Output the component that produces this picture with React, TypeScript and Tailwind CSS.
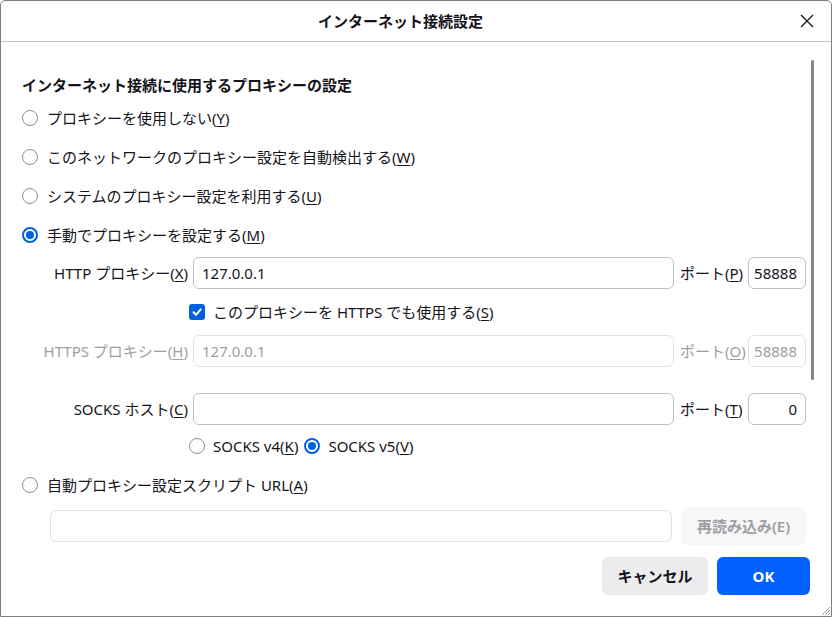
import React from "react";

const FONT = { fontFamily: '"Noto Sans", "Noto Sans CJK JP", sans-serif' };

function Key({ k }: { k: string }) {
  return (
    <>
      (<span className="underline underline-offset-2">{k}</span>)
    </>
  );
}

function Radio({ checked }: { checked?: boolean }) {
  if (checked) {
    return (
      <span className="flex h-4 w-4 shrink-0 items-center justify-center rounded-full border-2 border-[#0061e0] bg-white">
        <span className="h-2 w-2 rounded-full bg-[#0061e0]" />
      </span>
    );
  }
  return <span className="h-4 w-4 shrink-0 rounded-full border border-[#8f8f9d] bg-white" />;
}

function RadioRow({ label, k, checked }: { label: string; k: string; checked?: boolean }) {
  return (
    <div className="flex h-[39px] items-center gap-[9px]">
      <Radio checked={checked} />
      <span>
        {label}
        <Key k={k} />
      </span>
    </div>
  );
}

function Field({ value, disabled, right }: { value?: string; disabled?: boolean; right?: boolean }) {
  return (
    <div
      className={
        "flex h-8 items-center rounded-[6px] border bg-white px-[8px] " +
        (disabled ? "border-[#e3e3e6] text-[#9e9ea4]" : "border-[#bfbfc9] text-[#15141a]") +
        (right ? " justify-end" : "")
      }
    >
      {value}
    </div>
  );
}

export default function App() {
  return (
    <div
      className="relative flex h-[617px] w-[832px] flex-col overflow-hidden rounded-t-[5px] border border-[#7f7f7f] bg-white text-[15px] leading-5 text-[#15141a]"
      style={FONT}
    >
      <div className="flex h-[41px] shrink-0 items-center border-b border-[#c4c4c8]">
        <div className="flex-1 text-center font-bold">インターネット接続設定</div>
        <div className="pr-[17px]">
          <svg className="block" width="14" height="14" viewBox="0 0 14 14" fill="none" stroke="#15141a" strokeWidth="1.3">
            <path d="M1 1 L13 13 M13 1 L1 13" />
          </svg>
        </div>
      </div>

      <div className="relative flex-1 pl-[21px] pr-[25px]">
        <div className="absolute right-[17px] top-[18px] h-[320px] w-[3px] rounded-full bg-[#858585]" />

        <div className="mt-[33px] font-bold">インターネット接続に使用するプロキシーの設定</div>
        <div className="mt-[3px]">
          <RadioRow label="プロキシーを使用しない" k="Y" />
          <RadioRow label="このネットワークのプロキシー設定を自動検出する" k="W" />
          <RadioRow label="システムのプロキシー設定を利用する" k="U" />
          <RadioRow label="手動でプロキシーを設定する" k="M" checked />
        </div>

        <div className="mt-[3px] grid grid-cols-[171px_1fr_74px_58px] items-center">
          <div className="pr-[5px] text-right">
            HTTP プロキシー<Key k="X" />
          </div>
          <Field value="127.0.0.1" />
          <div className="whitespace-nowrap pl-[6px]">
            ポート<Key k="P" />
          </div>
          <Field value="58888" right />

          <div />
          <div className="col-span-3 -ml-[4px] flex h-[46px] items-center gap-[8px]">
            <span className="flex h-4 w-4 items-center justify-center rounded-[3px] bg-[#0061e0]">
              <svg width="12" height="12" viewBox="0 0 12 12" fill="none" stroke="white" strokeWidth="2" strokeLinecap="round" strokeLinejoin="round">
                <path d="M2.5 6.3 L5 8.8 L9.7 3.4" />
              </svg>
            </span>
            <span>
              このプロキシーを HTTPS でも使用する<Key k="S" />
            </span>
          </div>

          <div className="pr-[5px] text-right text-[#9e9ea4]">
            HTTPS プロキシー<Key k="H" />
          </div>
          <Field value="127.0.0.1" disabled />
          <div className="whitespace-nowrap pl-[6px] text-[#9e9ea4]">
            ポート<Key k="O" />
          </div>
          <Field value="58888" disabled right />

          <div className="col-span-4 h-[26px]" />

          <div className="pr-[5px] text-right">
            SOCKS ホスト<Key k="C" />
          </div>
          <Field />
          <div className="whitespace-nowrap pl-[6px]">
            ポート<Key k="T" />
          </div>
          <Field value="0" right />

          <div />
          <div className="col-span-3 -ml-[4px] flex h-[42px] items-center">
            <Radio />
            <span className="ml-[8px]">
              SOCKS v4<Key k="K" />
            </span>
            <span className="ml-[6px]">
              <Radio checked />
            </span>
            <span className="ml-[8px]">
              SOCKS v5<Key k="V" />
            </span>
          </div>
        </div>

        <div className="flex h-[36px] items-center gap-[9px]">
          <Radio />
          <span>
            自動プロキシー設定スクリプト URL<Key k="A" />
          </span>
        </div>

        <div className="mt-[4px] flex items-center gap-[9px] pl-[28px]">
          <div className="h-8 flex-1 rounded-[6px] border border-[#e3e3e6] bg-white" />
          <div className="flex h-[38px] w-[125px] items-center justify-center rounded-[6px] bg-[#f7f7f8] font-semibold text-[#9e9ea4]">
            再読み込み(E)
          </div>
        </div>

        <div className="-mr-[4px] mt-[12px] flex justify-end gap-[9px]">
          <div className="flex h-[38px] w-[106px] items-center justify-center rounded-[6px] bg-[#ececee] font-bold">
            キャンセル
          </div>
          <div className="flex h-[38px] w-[93px] items-center justify-center rounded-[6px] bg-[#0061ff] font-bold text-white">
            OK
          </div>
        </div>
      </div>

      <svg className="absolute bottom-0 right-0" width="12" height="12" viewBox="0 0 12 12" stroke="#9a9a9a" strokeWidth="1">
        <path d="M11 3 L3 11 M11 6 L6 11 M11 9 L9 11" />
      </svg>
    </div>
  );
}
